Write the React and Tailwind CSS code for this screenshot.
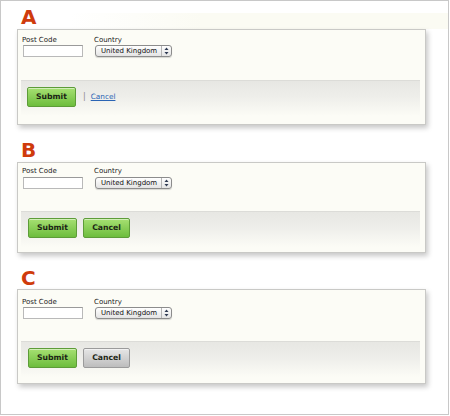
import React from "react";

const FONT = { fontFamily: '"DejaVu Sans", "Liberation Sans", sans-serif' };

function Letter({ children, rowClass }) {
  return (
    <div className={rowClass}>
      <span className="ml-[20px] block text-[20px] leading-[20px] font-bold text-[#cf3b0c]" style={FONT}>
        {children}
      </span>
    </div>
  );
}

function SelectBox() {
  return (
    <div className="ml-px flex h-[12px] w-[77px] items-stretch rounded-[3px] border border-[#8c8c8c] bg-[linear-gradient(#ffffff,#e4e4e4)] shadow-[0_1px_1px_rgba(0,0,0,0.15)]">
      <div className="flex-1 pl-[5px] text-[7px] leading-[10px] text-[#111]" style={FONT}>
        United Kingdom
      </div>
      <div className="flex w-[10px] items-center justify-center border-l border-[#b5b5b5]">
        <svg width="5" height="8" viewBox="0 0 5 8">
          <path d="M2.5 0.5 L4.5 3 L0.5 3 Z" fill="#2e3a52" />
          <path d="M0.5 5 L4.5 5 L2.5 7.5 Z" fill="#2e3a52" />
        </svg>
      </div>
    </div>
  );
}

function Fields({ topClass, inputGap }) {
  return (
    <div className={`flex ${topClass} pl-[4px]`}>
      <div className="flex w-[72px] flex-col">
        <div className="h-[8px] text-[7px] leading-[8px] text-[#222]" style={FONT}>
          Post Code
        </div>
        <div className={`${inputGap} ml-px h-[12px] w-[60px] border border-[#b9b9b9] border-t-[#9a9a9a] bg-white`} />
      </div>
      <div className="flex flex-col">
        <div className="h-[8px] text-[7px] leading-[8px] text-[#222]" style={FONT}>
          Country
        </div>
        <div className={inputGap}>
          <SelectBox />
        </div>
      </div>
    </div>
  );
}

function Btn({ children, gray, w }) {
  const base = gray
    ? "border-[#9b9b9b] bg-[linear-gradient(#e6e6e6,#bdbdbd)]"
    : "border-[#5d9c38] bg-[linear-gradient(#a6e072,#6dbd3d)]";
  return (
    <div
      className={`flex h-[20px] ${w} items-center justify-center rounded-[2px] border ${base} text-[7.7px] font-bold text-[#1c2414] shadow-[inset_0_1px_0_rgba(255,255,255,0.5)]`}
      style={FONT}
    >
      {children}
    </div>
  );
}

function Panel({ h, fieldsTop, inputGap, footerTop, footerPad, children }) {
  return (
    <div
      className={`ml-[16px] flex ${h} w-[409px] flex-col border border-[#c9c9c6] bg-[#fcfcf6] shadow-[2px_3px_5px_rgba(0,0,0,0.22)]`}
    >
      <Fields topClass={fieldsTop} inputGap={inputGap} />
      <div
        className={`${footerTop} ml-[3px] mr-[5px] flex h-[36px] items-start gap-[6px] border-t border-[#dcdcd8] bg-[linear-gradient(#e7e7e3,#eeeeea_45%,#fcfcf6)] pt-[6px] ${footerPad}`}
      >
        {children}
      </div>
    </div>
  );
}

export default function App() {
  return (
    <div className="h-[416px] w-[450px] bg-white">
      <div className="flex h-[415px] w-[449px] flex-col border border-[#c8c8c8] bg-white">
        <Letter rowClass="mt-[6px] h-[22px] bg-[linear-gradient(to_right,#ffffff_15%,#fbfbf3_45%)] bg-[length:100%_16px] bg-bottom bg-no-repeat">
          A
        </Letter>
        <Panel h="h-[96px]" fieldsTop="pt-[6px]" inputGap="mt-px" footerTop="mt-[23px]" footerPad="pl-[6px]">
          <Btn w="w-[49px]">Submit</Btn>
          <div className="flex h-[20px] items-center gap-[5px] pl-[1px]">
            <span className="text-[8px] text-[#8a8a8a]" style={FONT}>|</span>
            <a className="text-[7.3px] text-[#2a64b4] underline" style={FONT} href="#">
              Cancel
            </a>
          </div>
        </Panel>

        <Letter rowClass="mt-[15px] h-[22px]">B</Letter>
        <Panel h="h-[91px]" fieldsTop="pt-[4px]" inputGap="mt-[2px]" footerTop="mt-[22px]" footerPad="pl-[7px]">
          <Btn w="w-[49px]">Submit</Btn>
          <Btn w="w-[47px]">Cancel</Btn>
        </Panel>

        <Letter rowClass="mt-[15px] h-[21px]">C</Letter>
        <Panel h="h-[95px]" fieldsTop="pt-[8px]" inputGap="mt-px" footerTop="mt-[22px]" footerPad="pl-[7px]">
          <Btn w="w-[49px]">Submit</Btn>
          <Btn w="w-[47px]" gray>
            Cancel
          </Btn>
        </Panel>
      </div>
    </div>
  );
}
